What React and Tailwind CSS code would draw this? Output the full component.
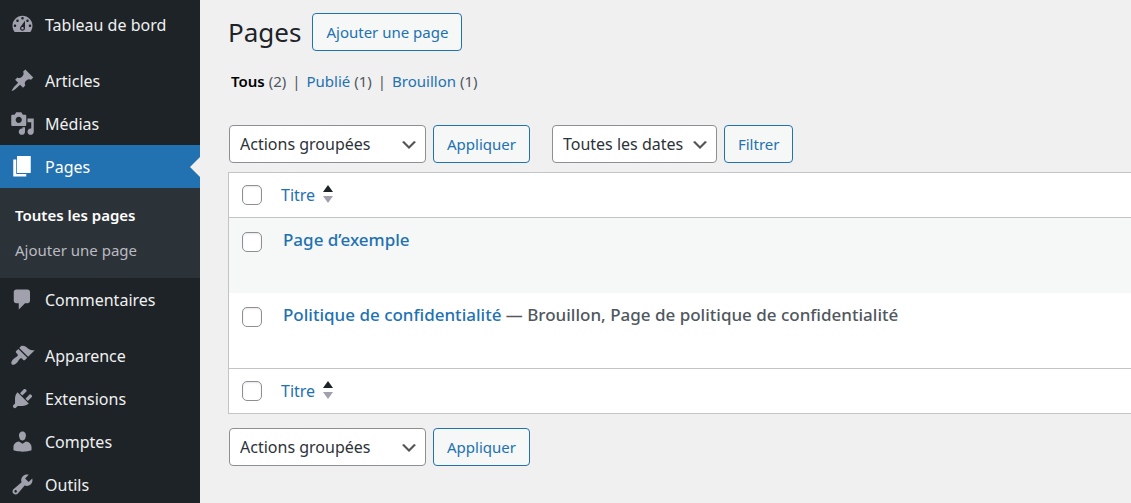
const ICONS = {
    dashboard:
        "M3.76 16h12.48c1.1-1.37 1.76-3.11 1.76-5 0-4.42-3.58-8-8-8s-8 3.58-8 8c0 1.89.66 3.63 1.76 5zM10 4c.55 0 1 .45 1 1s-.45 1-1 1-1-.45-1-1 .45-1 1-1zM6 6c.55 0 1 .45 1 1s-.45 1-1 1-1-.45-1-1 .45-1 1-1zm8 0c.55 0 1 .45 1 1s-.45 1-1 1-1-.45-1-1 .45-1 1-1zm-5.37 5.55L12 7v6c0 1.1-.9 2-2 2s-2-.9-2-2c0-.57.24-1.08.63-1.45zM4 10c.55 0 1 .45 1 1s-.45 1-1 1-1-.45-1-1 .45-1 1-1zm12 0c.55 0 1 .45 1 1s-.45 1-1 1-1-.45-1-1 .45-1 1-1zm-5 3c0-.55-.45-1-1-1s-1 .45-1 1 .45 1 1 1 1-.45 1-1z",
    post: "M10.44 3.02l1.82-1.82 6.36 6.35-1.83 1.82c-1.05-.68-2.48-.57-3.41.36l-.75.75c-.92.93-1.04 2.35-.35 3.41l-1.83 1.82-2.41-2.41-2.8 2.79c-.42.42-3.38 2.71-3.8 2.29s1.86-3.39 2.28-3.81l2.79-2.79L4.1 9.36l1.83-1.82c1.05.69 2.48.57 3.4-.36l.75-.75c.93-.92 1.05-2.35.36-3.41z",
    media: "M13 11V4c0-.55-.45-1-1-1h-1.67L9 1H5L3.67 3H2c-.55 0-1 .45-1 1v7c0 .55.45 1 1 1h10c.55 0 1-.45 1-1zM7 4.5c1.38 0 2.5 1.12 2.5 2.5S8.38 9.5 7 9.5 4.5 8.38 4.5 7 5.62 4.5 7 4.5zM14 6h5v10.5c0 1.38-1.12 2.5-2.5 2.5S14 17.88 14 16.5s1.12-2.5 2.5-2.5c.17 0 .34.02.5.05V9h-3V6zm-4 8.05V13h2v3.5c0 1.38-1.12 2.5-2.5 2.5S7 17.88 7 16.5 8.12 14 9.5 14c.17 0 .34.02.5.05z",
    page: "M5.6 15.2V1.6h11v13.6H5.6zM5 16h8v2H2.6V4.4H5V16z",
    comments:
        "M5 2h9c1.1 0 2 .9 2 2v7c0 1.1-.9 2-2 2h-2l-5 5v-5H5c-1.1 0-2-.9-2-2V4c0-1.1.9-2 2-2z",
    appearance:
        "M14.48 11.06L7.41 3.99l1.5-1.5c.5-.56 2.3-.47 3.51.32 1.21.8 1.43 1.28 2.91 2.1 1.18.64 2.45 1.26 4.45.85zm-.71.71L6.7 4.7 4.93 6.47c-.39.39-.39 1.02 0 1.41l1.06 1.06c.39.39.39 1.03 0 1.42-.6.6-1.43 1.11-2.21 1.69-.35.26-.7.53-1.01.84C1.43 14.23.4 16.08 1.4 17.07c.99 1 2.84-.03 4.18-1.36.31-.31.58-.66.85-1.02.57-.78 1.08-1.61 1.69-2.21.39-.39 1.02-.39 1.41 0l1.06 1.06c.39.39 1.02.39 1.41 0z",
    plugins:
        "M13.11 4.36L9.87 7.6 8 5.73l3.24-3.24c.35-.34 1.05-.2 1.56.32.52.51.66 1.21.31 1.55zm-8 1.77l.91-1.12 9.01 9.01-1.19.84c-.71.71-2.63 1.16-3.82 1.16H6.14L4.9 17.26c-.59.59-1.54.59-2.12 0-.59-.58-.59-1.53 0-2.12l1.24-1.24v-3.88c0-1.13.4-3.19 1.09-3.89zm7.26 3.97l3.24-3.24c.34-.35 1.04-.21 1.55.31.52.51.66 1.21.31 1.55l-3.24 3.25z",
    users: "M10 9.25c-2.27 0-2.73-3.44-2.73-3.44C7 4.02 7.82 2 9.97 2c2.16 0 2.98 2.02 2.71 3.81 0 0-.41 3.44-2.68 3.44zm0 2.57L12.72 10c2.39 0 4.52 2.33 4.52 4.53v2.49s-3.65 1.13-7.24 1.13c-3.65 0-7.24-1.13-7.24-1.13v-2.49c0-2.25 1.94-4.48 4.47-4.48z",
    tools: "M16.68 9.77c-1.34 1.34-3.3 1.67-4.95.99l-5.41 6.52c-.99.99-2.59.99-3.58 0s-.99-2.59 0-3.57l6.52-5.42c-.68-1.65-.35-3.61.99-4.95 1.28-1.28 3.12-1.62 4.72-1.06l-2.89 2.89 2.82 2.82 2.86-2.87c.53 1.58.18 3.39-1.08 4.65zM3.81 16.21c.4.39 1.04.39 1.43 0 .4-.4.4-1.04 0-1.43-.39-.4-1.03-.4-1.43 0-.39.39-.39 1.03 0 1.43z",
};

function MenuItem({ icon, label, current }) {
    return (
        <a
            href="#"
            className={`relative flex h-[43px] shrink-0 items-center ${
                current ? "bg-[#2271b1] text-white" : "text-[#f0f0f1]"
            }`}
        >
            <svg
                viewBox="0 0 20 20"
                className={`mx-2.5 size-[25px] shrink-0 ${
                    current ? "fill-white" : "fill-[#a0a1ac]"
                }`}
                aria-hidden="true"
            >
                <path fillRule="evenodd" d={ICONS[icon]} />
            </svg>
            {label}
            {current && (
                <span className="absolute right-0 top-1/2 -translate-y-1/2 border-y-10 border-r-10 border-y-transparent border-r-[#f0f0f1]" />
            )}
        </a>
    );
}

function Sidebar() {
    return (
        <nav className="flex w-[200px] shrink-0 flex-col bg-[#1d2327] pt-[3px] text-base">
            <MenuItem icon="dashboard" label="Tableau de bord" />
            <div className="h-[13px] shrink-0" />
            <MenuItem icon="post" label="Articles" />
            <MenuItem icon="media" label="Médias" />
            <MenuItem icon="page" label="Pages" current />
            <div className="flex shrink-0 flex-col bg-[#2c3338] px-[15px] py-2.5 text-[15px] leading-[35px]">
                <a href="#" className="font-semibold text-white">
                    Toutes les pages
                </a>
                <a href="#" className="text-[#b9bac2]">
                    Ajouter une page
                </a>
            </div>
            <MenuItem icon="comments" label="Commentaires" />
            <div className="h-[13px] shrink-0" />
            <MenuItem icon="appearance" label="Apparence" />
            <MenuItem icon="plugins" label="Extensions" />
            <MenuItem icon="users" label="Comptes" />
            <MenuItem icon="tools" label="Outils" />
        </nav>
    );
}

function Button({ children }) {
    return (
        <button
            type="button"
            className="h-[38px] rounded border border-[#2271b1] bg-[#f6f7f7] px-[13px] text-[15px] text-[#2271b1]"
        >
            {children}
        </button>
    );
}

function Select({ label, value, className }) {
    return (
        <div className={`relative ${className}`}>
            <select
                aria-label={label}
                className="h-[38px] w-full appearance-none rounded border border-[#8c8f94] bg-white pl-2.5 text-base text-[#2c3338]"
            >
                <option>{value}</option>
            </select>
            <svg
                viewBox="0 0 20 20"
                className="pointer-events-none absolute right-[7px] top-2.5 size-5 fill-[#555]"
                aria-hidden="true"
            >
                <path d="M5 6l5 5 5-5 2 1-7 7-7-7 2-1z" />
            </svg>
        </div>
    );
}

function Checkbox({ label }) {
    return (
        <input
            type="checkbox"
            aria-label={label}
            className="block size-5 appearance-none rounded-[5px] border border-[#8c8f94] bg-white shadow-[inset_0_1px_2px_rgba(0,0,0,0.1)]"
        />
    );
}

function TitleRow({ label }) {
    return (
        <tr className="h-[45px]">
            <td className="w-[52px] pl-[13px]">
                <Checkbox label={label} />
            </td>
            <th scope="col" className="text-left font-normal">
                <a href="#" className="inline-flex items-center gap-2 text-[#2271b1]">
                    Titre
                    <svg viewBox="0 0 10 18" className="mb-0.5 h-[18px] w-2.5" aria-hidden="true">
                        <path d="M5 0l5 7H0z" fill="#1d2327" />
                        <path d="M5 18l5-7H0z" fill="#a0a1ac" />
                    </svg>
                </a>
            </th>
        </tr>
    );
}

function PageRow({ title, state, striped }) {
    return (
        <tr className={`h-[75px] align-top ${striped ? "bg-[#f6f7f7]" : ""}`}>
            <td className="pl-[13px] pt-3.5">
                <Checkbox label={`Sélectionner ${title}`} />
            </td>
            <td className="pl-0.5 pt-2.5 text-[17px] leading-6 font-medium text-[#50575e]">
                <a href="#" className="text-[#2271b1]">
                    {title}
                </a>
                {state && ` — ${state}`}
            </td>
        </tr>
    );
}

function StatusLinks() {
    return (
        <ul className="mt-[18px] flex gap-1.5 pl-[3px] text-[15px] leading-6 text-[#50575e]">
            <li>
                <a href="#" className="font-semibold text-black">
                    Tous
                </a>{" "}
                (2)
            </li>
            <li>|</li>
            <li>
                <a href="#" className="text-[#2271b1]">
                    Publié
                </a>{" "}
                (1)
            </li>
            <li>|</li>
            <li>
                <a href="#" className="text-[#2271b1]">
                    Brouillon
                </a>{" "}
                (1)
            </li>
        </ul>
    );
}

export default function App() {
    return (
        <div className="flex h-screen overflow-hidden bg-[#f0f0f1] font-['Noto_Sans',sans-serif]">
            <Sidebar />
            <main className="min-w-0 flex-1 pl-7 pt-[13px]">
                <div className="flex items-center gap-[11px]">
                    <h1 className="text-[26px] leading-[38px] text-[#1d2327]">Pages</h1>
                    <Button>Ajouter une page</Button>
                </div>
                <StatusLinks />
                <div className="mt-8 flex gap-[7px] pl-px">
                    <Select
                        label="Actions groupées"
                        value="Actions groupées"
                        className="w-[197px]"
                    />
                    <Button>Appliquer</Button>
                    <Select
                        label="Filtrer par date"
                        value="Toutes les dates"
                        className="ml-[15px] w-[165px]"
                    />
                    <Button>Filtrer</Button>
                </div>
                <table className="mt-[9px] w-full border-separate border-spacing-0 border-y border-l border-[#c3c4c7] bg-white text-base">
                    <thead className="[&_td]:border-b [&_td]:border-[#c3c4c7] [&_th]:border-b [&_th]:border-[#c3c4c7]">
                        <TitleRow label="Tout sélectionner" />
                    </thead>
                    <tbody>
                        <PageRow title="Page d’exemple" striped />
                        <PageRow
                            title="Politique de confidentialité"
                            state="Brouillon, Page de politique de confidentialité"
                        />
                    </tbody>
                    <tfoot className="[&_td]:border-t [&_td]:border-[#c3c4c7] [&_th]:border-t [&_th]:border-[#c3c4c7]">
                        <TitleRow label="Tout sélectionner en bas" />
                    </tfoot>
                </table>
                <div className="mt-3.5 flex gap-[7px] pl-px">
                    <Select
                        label="Actions groupées en bas"
                        value="Actions groupées"
                        className="w-[197px]"
                    />
                    <Button>Appliquer</Button>
                </div>
            </main>
        </div>
    );
}
